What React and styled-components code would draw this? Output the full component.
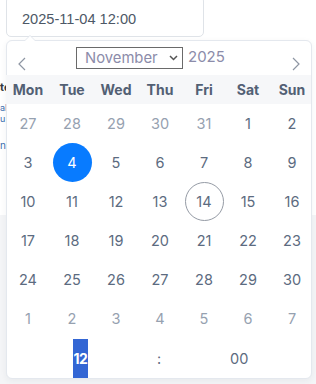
import React from "react";
import styled, { createGlobalStyle } from "styled-components";

const Global = createGlobalStyle`
  html, body { margin: 0; padding: 0; background: #f4f5f7; }
  body { font-family: Inter, "Noto Sans", sans-serif; overflow: hidden; }
  #root { width: 316px; height: 384px; position: relative; overflow: hidden; }
`;

const Page = styled.div`
  position: relative;
  width: 316px;
  height: 384px;
`;

const TopArea = styled.div`
  background: #ffffff;
  height: 215px;
  display: flex;
  flex-direction: column;
`;

const InputBox = styled.div`
  margin: -4px 0 0 6px;
  width: 198px;
  height: 41px;
  flex-shrink: 0;
  box-sizing: border-box;
  border: 1px solid #dfe3e8;
  border-radius: 5px;
  display: flex;
  align-items: center;
  padding: 4px 0 0 15px;
  font-family: "Liberation Sans", Arial, sans-serif;
  font-size: 14.6px;
  color: #4d5866;
  background: #fff;
`;

const BehindText = styled.div`
  display: flex;
  flex-direction: column;
  font-family: Inter, sans-serif;
`;

const Line = styled.span`
  display: block;
  white-space: nowrap;
  color: ${p => p.$color};
  font-weight: ${p => (p.$bold ? 700 : 400)};
  font-size: ${p => p.$size}px;
  line-height: ${p => p.$size}px;
  height: ${p => p.$size}px;
  margin-top: ${p => p.$mt}px;
`;

const Popup = styled.div`
  position: absolute;
  top: 40px;
  left: 6px;
  width: 306px;
  height: 339px;
  box-sizing: border-box;
  background: #fff;
  border: 1px solid #e4e8ee;
  border-radius: 6px;
  box-shadow: 0 2px 6px rgba(40, 50, 70, 0.06);
  display: flex;
  flex-direction: column;
`;

const Arrow = styled.span`
  position: absolute;
  top: -6px;
  left: 17px;
  width: 0;
  height: 0;
  border-left: 6px solid transparent;
  border-right: 6px solid transparent;
  border-bottom: 6px solid #e4e8ee;
  &::after {
    content: "";
    position: absolute;
    left: -5px;
    top: 1px;
    border-left: 5px solid transparent;
    border-right: 5px solid transparent;
    border-bottom: 5px solid #fff;
  }
`;

const MonthBar = styled.div`
  height: 35px;
  display: flex;
  align-items: flex-start;
  position: relative;
`;

const Nav = styled.span`
  width: 30px;
  padding-top: 16px;
  display: flex;
  justify-content: center;
  color: #8e96a3;
`;

const MonthCenter = styled.div`
  flex: 1;
  display: flex;
  align-items: flex-start;
  justify-content: flex-start;
  padding: 6px 0 0 39px;
  gap: 5px;
`;

const SelectWrap = styled.span`
  position: relative;
  display: inline-flex;
`;

const MonthSelect = styled.select`
  appearance: none;
  -webkit-appearance: none;
  width: 107px;
  height: 22px;
  box-sizing: border-box;
  border: 1px solid #6a6a6a;
  border-radius: 0;
  background: #fff;
  font-family: Inter, sans-serif;
  font-size: 14.8px;
  color: #8c8caa;
  padding: 0 0 0 8px;
  line-height: 20px;
  outline: none;
`;

const Chevron = styled.svg`
  position: absolute;
  right: 5px;
  top: 8px;
  pointer-events: none;
`;

const Year = styled.span`
  font-size: 15px;
  color: #8c8caa;
  line-height: 20px;
`;

const WeekRow = styled.div`
  height: 29px;
  background: #f6f7f9;
  display: grid;
  grid-template-columns: repeat(7, 44px);
  align-items: center;
  margin-left: -1px;
`;

const WeekDay = styled.span`
  text-align: center;
  font-weight: 700;
  font-size: 14px;
  color: #526074;
`;

const DayGrid = styled.div`
  display: grid;
  grid-template-columns: repeat(7, 44px);
  grid-auto-rows: 39px;
  margin-left: -1px;
`;

const Day = styled.span`
  display: flex;
  align-items: center;
  justify-content: center;
  font-size: 14.5px;
  color: ${p => (p.$muted ? "#96a1b0" : "#5c6b80")};
  position: relative;
  & > b {
    font-weight: 400;
    position: relative;
    z-index: 1;
    color: ${p => (p.$selected ? "#fff" : "inherit")};
  }
  &::before {
    content: "";
    display: ${p => (p.$selected || p.$today ? "block" : "none")};
    position: absolute;
    width: 39px;
    height: 39px;
    box-sizing: border-box;
    border-radius: 50%;
    background: ${p => (p.$selected ? "#087bff" : "transparent")};
    border: ${p => (p.$today ? "1px solid #959ba5" : "none")};
  }
`;

const TimeRow = styled.div`
  height: 40px;
  display: grid;
  grid-template-columns: 1fr 30px 1fr;
  align-items: stretch;
  margin-top: 1px;
`;

const TimeCell = styled.div`
  display: flex;
  align-items: center;
  justify-content: ${p => p.$justify || "center"};
  padding-left: ${p => p.$pad || 0}px;
  font-size: 14.5px;
  color: #5c6b80;
`;

const HourHighlight = styled.span`
  align-self: stretch;
  display: flex;
  align-items: center;
  background: #3366d4;
  color: #fff;
  font-weight: 700;
  font-size: 14px;
  letter-spacing: -0.5px;
  padding: 0 0.5px;
`;

const weekdays = ["Mon", "Tue", "Wed", "Thu", "Fri", "Sat", "Sun"];

const days = [];
[27, 28, 29, 30, 31].forEach(d => days.push({ d, muted: true }));
for (let d = 1; d <= 30; d++) days.push({ d });
for (let d = 1; d <= 7; d++) days.push({ d, muted: true });

export default function App() {
  return (
    <>
      <Global />
      <Page>
        <TopArea>
          <InputBox>2025-11-04 12:00</InputBox>
          <BehindText>
            <Line $bold $color="#333a44" $size={11} $mt={45}>te</Line>
            <Line $color="#3b6fb0" $size={9} $mt={10}>al</Line>
            <Line $color="#3b6fb0" $size={9} $mt={2}>u</Line>
            <Line $color="#3b6fb0" $size={10} $mt={17}>n</Line>
          </BehindText>
        </TopArea>
        <Popup>
          <Arrow />
          <MonthBar>
            <Nav>
              <svg width="10" height="14" viewBox="0 0 10 14" fill="none">
                <path d="M8 1 L2 7 L8 13" stroke="#8e96a3" strokeWidth="1.2" />
              </svg>
            </Nav>
            <MonthCenter>
              <SelectWrap>
                <MonthSelect defaultValue="10">
                  {["January","February","March","April","May","June","July","August","September","October","November","December"].map((m, i) => (
                    <option key={m} value={i}>{m}</option>
                  ))}
                </MonthSelect>
                <Chevron width="9" height="6" viewBox="0 0 9 6">
                  <path d="M1 1 L4.5 4.5 L8 1" stroke="#555" strokeWidth="1.5" fill="none" />
                </Chevron>
              </SelectWrap>
              <Year>2025</Year>
            </MonthCenter>
            <Nav>
              <svg width="10" height="14" viewBox="0 0 10 14" fill="none">
                <path d="M2 1 L8 7 L2 13" stroke="#8e96a3" strokeWidth="1.2" />
              </svg>
            </Nav>
          </MonthBar>
          <WeekRow>
            {weekdays.map(w => <WeekDay key={w}>{w}</WeekDay>)}
          </WeekRow>
          <DayGrid>
            {days.map((x, i) => (
              <Day
                key={i}
                $muted={x.muted}
                $selected={!x.muted && x.d === 4}
                $today={!x.muted && x.d === 14}
              >
                <b>{x.d}</b>
              </Day>
            ))}
          </DayGrid>
          <TimeRow>
            <TimeCell $justify="flex-start" $pad={66}><HourHighlight>12</HourHighlight></TimeCell>
            <TimeCell>:</TimeCell>
            <TimeCell $justify="flex-start" $pad={56}>00</TimeCell>
          </TimeRow>
        </Popup>
      </Page>
    </>
  );
}
